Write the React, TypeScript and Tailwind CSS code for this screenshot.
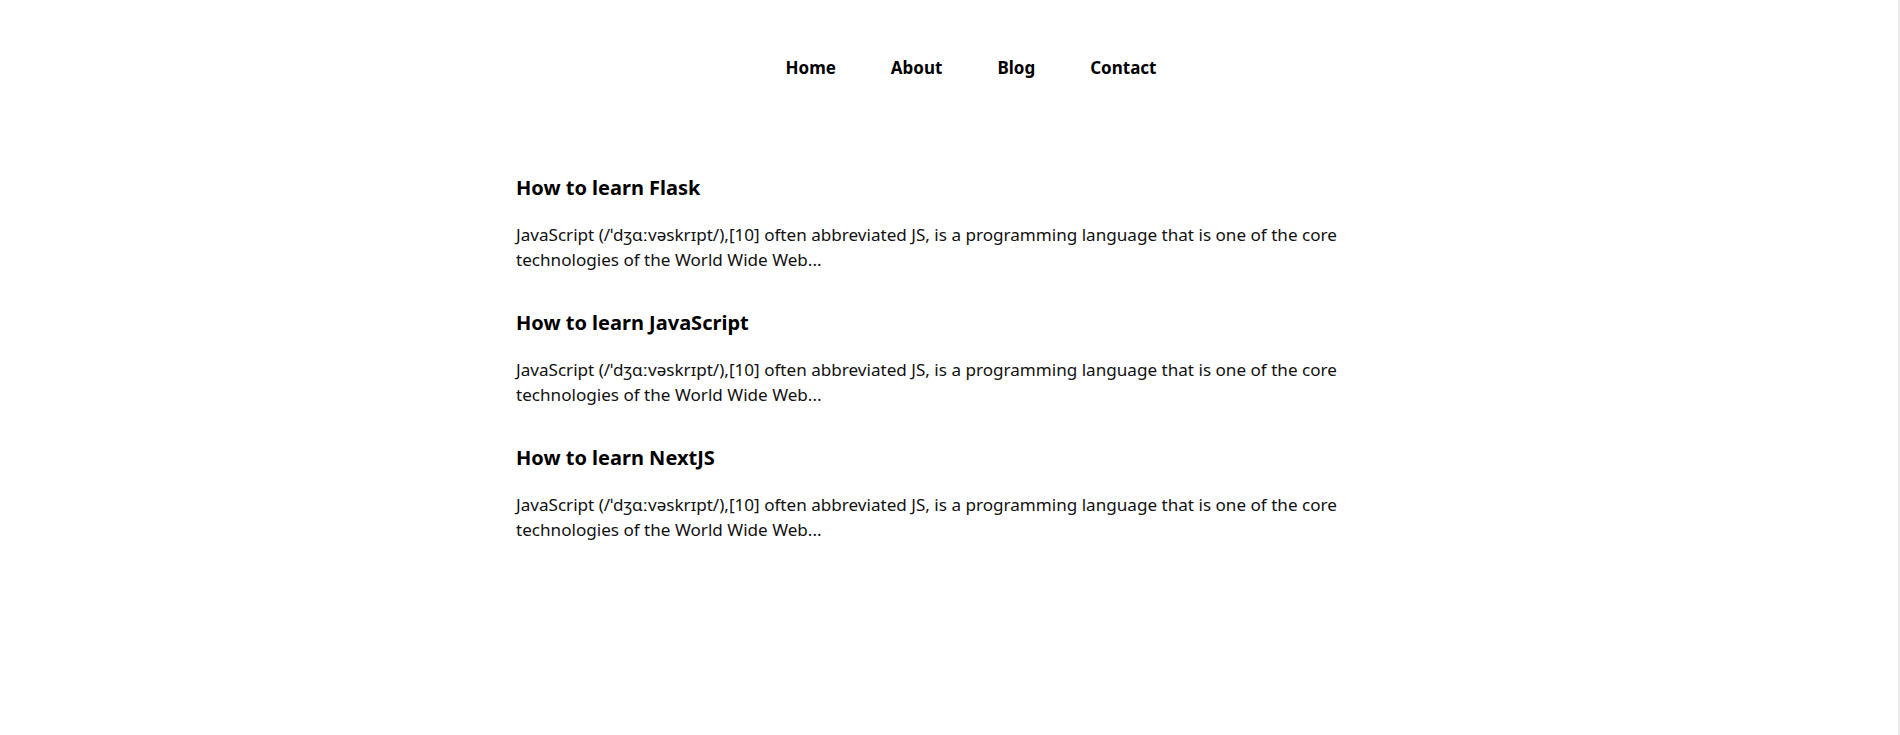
const posts = [
  { id: 1, title: "How to learn Flask" },
  { id: 2, title: "How to learn JavaScript" },
  { id: 3, title: "How to learn NextJS" },
];

const excerpt =
  "JavaScript (/ˈdʒɑːvəskrɪpt/),[10] often abbreviated JS, is a programming language that is one of the core technologies of the World Wide Web...";

const App = () => {
  return (
    <div className="flex min-h-screen bg-white text-black" style={{ fontFamily: '"Noto Sans", "Open Sans", sans-serif' }}>
      <div className="flex-1 flex flex-col">
        <nav className="flex justify-center pt-[55px] pl-[44px]">
          <ul className="flex gap-[55px] text-[17px] font-bold leading-[26px]">
            <li>Home</li>
            <li>About</li>
            <li>Blog</li>
            <li>Contact</li>
          </ul>
        </nav>

        <main className="w-[866px] mx-auto mt-[93px] flex flex-col gap-[37px]">
          {posts.map((post) => (
            <div key={post.id}>
              <h2 className="text-[20px] font-bold leading-[28px] mb-[20px]">{post.title}</h2>
              <p className="text-[17.1px] leading-[25px] text-[#111]">{excerpt}</p>
            </div>
          ))}
        </main>
      </div>
      <div className="w-[2px] bg-[#ededed]"></div>
    </div>
  );
};

export default App;
